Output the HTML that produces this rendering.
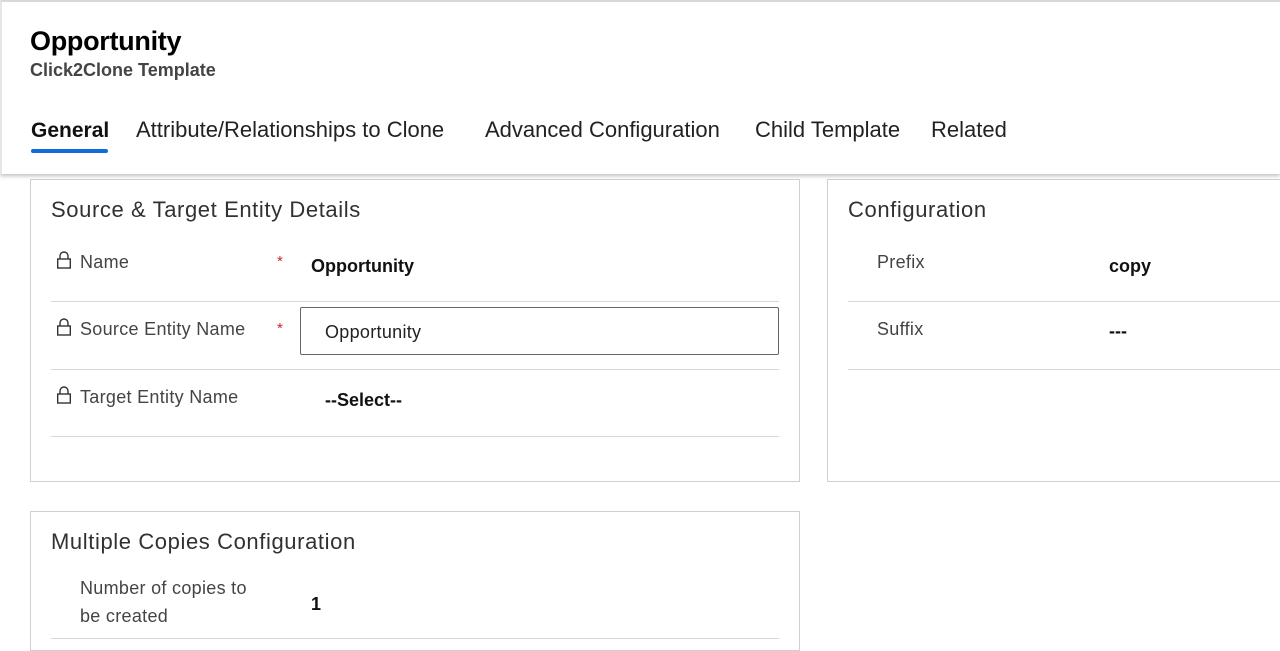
<!DOCTYPE html>
<html><head><style>
*{box-sizing:border-box;margin:0;padding:0}
body{width:1280px;height:640px;overflow:hidden;background:#fff;font-family:"Liberation Sans",sans-serif;color:#323130;position:relative}
.hdr{position:absolute;left:0;top:0;width:1280px;height:174px;border-top:2px solid #d8d8d8;border-left:2px solid #e6e6e6;background:#fff;box-shadow:0 2px 4px rgba(0,0,0,.25)}
.t{position:absolute;left:28px;top:24px;font-size:27px;font-weight:bold;color:#000;letter-spacing:-0.3px}
.st{position:absolute;left:28px;top:58px;font-size:18px;font-weight:bold;color:#444}
.tab{position:absolute;top:115px;font-size:22px;color:#222;white-space:nowrap}
.ul{position:absolute;left:29px;top:147px;width:77px;height:4px;border-radius:2px;background:#0f6cdf}
.card{position:absolute;border:1px solid #d0d0d0;background:#fff}
.h{position:absolute;font-size:22px;letter-spacing:0.6px;color:#323130;white-space:nowrap}
.lbl{position:absolute;font-size:18px;letter-spacing:0.3px;color:#444;white-space:nowrap}
.val{position:absolute;font-size:18px;font-weight:bold;color:#111;white-space:nowrap}
.ln{position:absolute;height:1px;background:#d8d8d8}
.ast{position:absolute;color:#c4262e;font-size:15px}
.lk{position:absolute}
</style></head><body>
<div class="hdr">
<div class="t">Opportunity</div>
<div class="st">Click2Clone Template</div>
<div class="tab" style="left:29px;top:117px;font-weight:bold;color:#111;font-size:21px">General</div>
<div class="tab" style="left:134px">Attribute/Relationships to Clone</div>
<div class="tab" style="left:483px">Advanced Configuration</div>
<div class="tab" style="left:753px">Child Template</div>
<div class="tab" style="left:929px">Related</div>
<div class="ul"></div>
</div>

<div class="card" style="left:30px;top:179px;width:770px;height:303px"></div>
<div class="h" style="left:51px;top:197px">Source &amp; Target Entity Details</div>
<svg class="lk" style="left:56px;top:250px" width="16" height="19" viewBox="0 0 16 19"><path d="M4 9V6a4 4 0 0 1 8 0v3" fill="none" stroke="#333" stroke-width="1.4"/><rect x="1.7" y="9" width="12.6" height="9" fill="none" stroke="#333" stroke-width="1.4"/></svg>
<div class="lbl" style="left:80px;top:252px">Name</div>
<div class="ast" style="left:277px;top:253px">*</div>
<div class="val" style="left:311px;top:256px">Opportunity</div>
<div class="ln" style="left:51px;top:301px;width:728px"></div>
<svg class="lk" style="left:56px;top:317px" width="16" height="19" viewBox="0 0 16 19"><path d="M4 9V6a4 4 0 0 1 8 0v3" fill="none" stroke="#333" stroke-width="1.4"/><rect x="1.7" y="9" width="12.6" height="9" fill="none" stroke="#333" stroke-width="1.4"/></svg>
<div class="lbl" style="left:80px;top:319px">Source Entity Name</div>
<div class="ast" style="left:277px;top:320px">*</div>
<div style="position:absolute;left:300px;top:307px;width:479px;height:48px;border:1px solid #666;border-radius:2px"></div>
<div class="lbl" style="left:325px;top:322px;color:#222">Opportunity</div>
<div class="ln" style="left:51px;top:369px;width:728px"></div>
<svg class="lk" style="left:56px;top:385px" width="16" height="19" viewBox="0 0 16 19"><path d="M4 9V6a4 4 0 0 1 8 0v3" fill="none" stroke="#333" stroke-width="1.4"/><rect x="1.7" y="9" width="12.6" height="9" fill="none" stroke="#333" stroke-width="1.4"/></svg>
<div class="lbl" style="left:80px;top:387px">Target Entity Name</div>
<div class="val" style="left:325px;top:390px">--Select--</div>
<div class="ln" style="left:51px;top:436px;width:728px"></div>

<div class="card" style="left:827px;top:179px;width:460px;height:303px"></div>
<div class="h" style="left:848px;top:197px">Configuration</div>
<div class="lbl" style="left:877px;top:252px">Prefix</div>
<div class="val" style="left:1109px;top:256px">copy</div>
<div class="ln" style="left:848px;top:301px;width:432px"></div>
<div class="lbl" style="left:877px;top:319px">Suffix</div>
<div class="val" style="left:1109px;top:321px">---</div>
<div class="ln" style="left:848px;top:369px;width:432px"></div>

<div class="card" style="left:30px;top:511px;width:770px;height:140px"></div>
<div class="h" style="left:51px;top:529px">Multiple Copies Configuration</div>
<div class="lbl" style="left:80px;top:574px;line-height:28px">Number of copies to<br>be created</div>
<div class="val" style="left:311px;top:594px">1</div>
<div class="ln" style="left:51px;top:638px;width:728px"></div>
</body></html>
